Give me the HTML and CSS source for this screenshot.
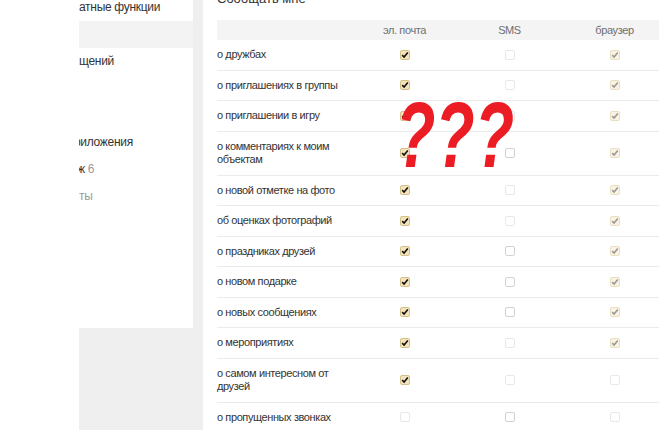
FILE: index.html
```html
<!DOCTYPE html>
<html lang="ru">
<head>
<meta charset="utf-8">
<title>Уведомления</title>
<link rel="stylesheet" href="styles.css">
</head>
<body>
<div class="page">
  <div class="blank"></div>
  <nav class="sidebar">
    <div class="item">атные функции</div>
    <div class="item active"></div>
    <div class="item">щений</div>
    <div class="item"></div>
    <div class="item"></div>
    <div class="item"><span class="shift-r">риложения</span></div>
    <div class="item"><span class="shift-zh">ж <span class="count">6</span></span></div>
    <div class="item muted">ты</div>
  </nav>
  <div class="gap"></div>
  <main class="main">
    <h2 class="title">Сообщать мне</h2>
    <table class="prefs">
      <colgroup><col class="c-label"><col class="c-opt"><col class="c-opt"><col class="c-opt"></colgroup>
      <thead>
        <tr><th></th><th>эл. почта</th><th>SMS</th><th>браузер</th></tr>
      </thead>
      <tbody>
        <tr><td>о дружбах</td><td class="c"><span class="cb on"><svg viewBox="0 0 10 10"><path d="M2.2 5.1L4.1 7.1L7.8 2.6"/></svg></span></td><td class="c"><span class="cb dis"></span></td><td class="c"><span class="cb on-dis"><svg viewBox="0 0 10 10"><path d="M2.2 5.1L4.1 7.1L7.8 2.6"/></svg></span></td></tr>
        <tr><td>о приглашениях в группы</td><td class="c"><span class="cb on"><svg viewBox="0 0 10 10"><path d="M2.2 5.1L4.1 7.1L7.8 2.6"/></svg></span></td><td class="c"><span class="cb dis"></span></td><td class="c"><span class="cb on-dis"><svg viewBox="0 0 10 10"><path d="M2.2 5.1L4.1 7.1L7.8 2.6"/></svg></span></td></tr>
        <tr><td>о приглашении в игру</td><td class="c"><span class="cb on"><svg viewBox="0 0 10 10"><path d="M2.2 5.1L4.1 7.1L7.8 2.6"/></svg></span></td><td class="c"><span class="cb dis"></span></td><td class="c"><span class="cb on-dis"><svg viewBox="0 0 10 10"><path d="M2.2 5.1L4.1 7.1L7.8 2.6"/></svg></span></td></tr>
        <tr><td>о комментариях к моим объектам</td><td class="c"><span class="cb on"><svg viewBox="0 0 10 10"><path d="M2.2 5.1L4.1 7.1L7.8 2.6"/></svg></span></td><td class="c"><span class="cb"></span></td><td class="c"><span class="cb on-dis"><svg viewBox="0 0 10 10"><path d="M2.2 5.1L4.1 7.1L7.8 2.6"/></svg></span></td></tr>
        <tr><td>о новой отметке на фото</td><td class="c"><span class="cb on"><svg viewBox="0 0 10 10"><path d="M2.2 5.1L4.1 7.1L7.8 2.6"/></svg></span></td><td class="c"><span class="cb dis"></span></td><td class="c"><span class="cb on-dis"><svg viewBox="0 0 10 10"><path d="M2.2 5.1L4.1 7.1L7.8 2.6"/></svg></span></td></tr>
        <tr><td>об оценках фотографий</td><td class="c"><span class="cb on"><svg viewBox="0 0 10 10"><path d="M2.2 5.1L4.1 7.1L7.8 2.6"/></svg></span></td><td class="c"><span class="cb dis"></span></td><td class="c"><span class="cb on-dis"><svg viewBox="0 0 10 10"><path d="M2.2 5.1L4.1 7.1L7.8 2.6"/></svg></span></td></tr>
        <tr><td>о праздниках друзей</td><td class="c"><span class="cb on"><svg viewBox="0 0 10 10"><path d="M2.2 5.1L4.1 7.1L7.8 2.6"/></svg></span></td><td class="c"><span class="cb"></span></td><td class="c"><span class="cb on-dis"><svg viewBox="0 0 10 10"><path d="M2.2 5.1L4.1 7.1L7.8 2.6"/></svg></span></td></tr>
        <tr><td>о новом подарке</td><td class="c"><span class="cb on"><svg viewBox="0 0 10 10"><path d="M2.2 5.1L4.1 7.1L7.8 2.6"/></svg></span></td><td class="c"><span class="cb"></span></td><td class="c"><span class="cb on-dis"><svg viewBox="0 0 10 10"><path d="M2.2 5.1L4.1 7.1L7.8 2.6"/></svg></span></td></tr>
        <tr><td>о новых сообщениях</td><td class="c"><span class="cb on"><svg viewBox="0 0 10 10"><path d="M2.2 5.1L4.1 7.1L7.8 2.6"/></svg></span></td><td class="c"><span class="cb"></span></td><td class="c"><span class="cb on-dis"><svg viewBox="0 0 10 10"><path d="M2.2 5.1L4.1 7.1L7.8 2.6"/></svg></span></td></tr>
        <tr><td>о мероприятиях</td><td class="c"><span class="cb on"><svg viewBox="0 0 10 10"><path d="M2.2 5.1L4.1 7.1L7.8 2.6"/></svg></span></td><td class="c"><span class="cb dis"></span></td><td class="c"><span class="cb on-dis"><svg viewBox="0 0 10 10"><path d="M2.2 5.1L4.1 7.1L7.8 2.6"/></svg></span></td></tr>
        <tr><td>о самом интересном от друзей</td><td class="c"><span class="cb on"><svg viewBox="0 0 10 10"><path d="M2.2 5.1L4.1 7.1L7.8 2.6"/></svg></span></td><td class="c"><span class="cb dis"></span></td><td class="c"><span class="cb dis"></span></td></tr>
        <tr><td>о пропущенных звонках</td><td class="c"><span class="cb dis"></span></td><td class="c"><span class="cb"></span></td><td class="c"><span class="cb dis"></span></td></tr>
      </tbody>
    </table>
  </main>
</div>
<div class="scribble">???</div>
</body>
</html>
```
FILE: styles.css
```css
html, body {
  margin: 0;
  padding: 0;
}
body {
  background: #efefef;
  font-family: "Liberation Sans", Arial, sans-serif;
  color: #333;
  overflow: hidden;
  height: 430px;
  position: relative;
}
.page {
  display: flex;
  align-items: flex-start;
  margin-top: -20px;
  min-height: 470px;
}
.blank {
  width: 79px;
  flex: none;
  align-self: stretch;
  background: #fff;
}
.sidebar {
  width: 114px;
  flex: none;
  height: 348px;
  padding-top: 13.5px;
  box-sizing: border-box;
  background: #fff;
  overflow: hidden;
}
.item {
  height: 27px;
  line-height: 27px;
  font-size: 12px;
  letter-spacing: -0.3px;
  color: #333;
  white-space: nowrap;
}
.item.active {
  background: #f3f3f3;
}
.item.muted {
  color: #9a9a9a;
}
.count {
  color: #9a9a9a;
}
.shift-r {
  display: inline-block;
  margin-left: -5px;
}
.shift-zh {
  display: inline-block;
  margin-left: -2px;
}
.gap {
  width: 10px;
  flex: none;
}
.main {
  flex: 1;
  align-self: stretch;
  background: #fff;
  padding: 11px 0 0 14px;
  overflow: hidden;
}
.title {
  margin: 0 0 13px;
  font-size: 13px;
  font-weight: normal;
  line-height: 16px;
  color: #333;
}
.prefs {
  border-collapse: collapse;
  table-layout: fixed;
  width: 450px;
  font-size: 11px;
  letter-spacing: -0.4px;
  color: #333;
}
.c-label { width: 135px; }
.c-opt { width: 105px; }
.prefs th {
  background: #f4f4f4;
  height: 20px;
  padding: 0;
  font-weight: normal;
  color: #6f6f6f;
  text-align: center;
}
.prefs td {
  border-bottom: 1px solid #ebebeb;
  padding: 8px 0;
  line-height: 13.5px;
  vertical-align: middle;
}
.prefs td.c {
  text-align: center;
}
.cb {
  display: block;
  margin: 0 auto;
  width: 10px;
  height: 10px;
  box-sizing: border-box;
  border: 1px solid #d2d2d2;
  border-radius: 2px;
  background: #fff;
  position: relative;
}
.cb.dis {
  border-color: #e8e8e8;
}
.cb.on {
  background: #f4e4bd;
  border-color: #d6c08a;
  color: #111;
}
.cb.on-dis {
  background: #f9f3e3;
  border-color: #ebdfc2;
  color: #999;
}
.cb svg {
  position: absolute;
  left: -1px;
  top: -1px;
  width: 10px;
  height: 10px;
  fill: none;
  stroke: currentColor;
  stroke-width: 1.6;
}
.scribble {
  position: absolute;
  left: 396px;
  top: 89px;
  font-size: 92px;
  line-height: 1;
  font-weight: bold;
  font-style: italic;
  color: #ec1c24;
  transform: scaleX(0.7);
  transform-origin: left top;
  white-space: nowrap;
}
```
